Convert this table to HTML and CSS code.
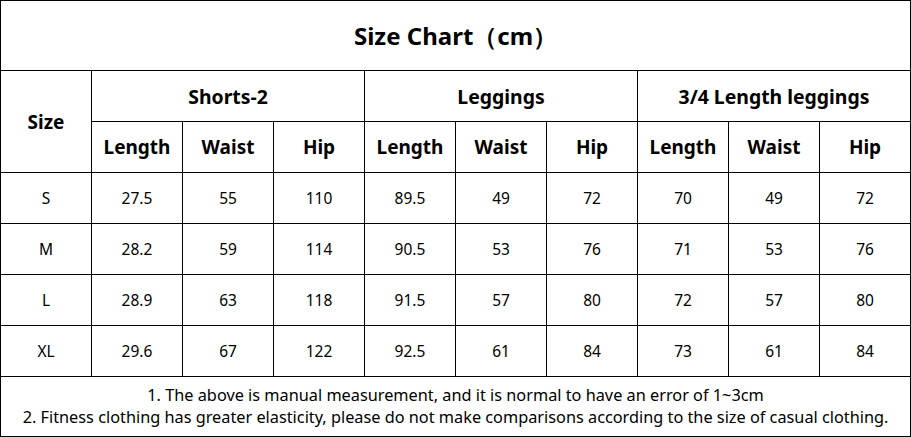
FILE: index.html
```html
<!DOCTYPE html>
<html>
<head>
<meta charset="utf-8">
<link rel="stylesheet" href="styles.css">
</head>
<body>
<table class="chart">
  <colgroup>
    <col class="c"><col class="c"><col class="c"><col class="c"><col class="c">
    <col class="c"><col class="c"><col class="c"><col class="c"><col class="c">
  </colgroup>
  <tr class="r-title"><th colspan="10" class="title">Size Chart（cm）</th></tr>
  <tr class="r-row"><th rowspan="2" class="head">Size</th><th colspan="3" class="head group">Shorts-2</th><th colspan="3" class="head group">Leggings</th><th colspan="3" class="head group">3/4 Length leggings</th></tr>
  <tr class="r-row"><th class="head">Length</th><th class="head">Waist</th><th class="head">Hip</th><th class="head">Length</th><th class="head">Waist</th><th class="head">Hip</th><th class="head">Length</th><th class="head">Waist</th><th class="head">Hip</th></tr>
  <tr class="r-row"><td>S</td><td>27.5</td><td>55</td><td>110</td><td>89.5</td><td>49</td><td>72</td><td>70</td><td>49</td><td>72</td></tr>
  <tr class="r-row"><td>M</td><td>28.2</td><td>59</td><td>114</td><td>90.5</td><td>53</td><td>76</td><td>71</td><td>53</td><td>76</td></tr>
  <tr class="r-row"><td>L</td><td>28.9</td><td>63</td><td>118</td><td>91.5</td><td>57</td><td>80</td><td>72</td><td>57</td><td>80</td></tr>
  <tr class="r-row"><td>XL</td><td>29.6</td><td>67</td><td>122</td><td>92.5</td><td>61</td><td>84</td><td>73</td><td>61</td><td>84</td></tr>
  <tr class="r-foot"><td colspan="10" class="notes">1. The above is manual measurement, and it is normal to have an error of 1~3cm<br>2. Fitness clothing has greater elasticity, please do not make comparisons according to the size of casual clothing.</td></tr>
</table>
</body>
</html>
```
FILE: styles.css
```css
html, body {
  margin: 0;
  padding: 0;
  background: #fff;
}
.chart {
  border-collapse: collapse;
  table-layout: fixed;
  width: 911px;
  font-family: "Noto Sans", "Open Sans", sans-serif;
  color: #000;
}
.c {
  width: 91px;
}
.chart th, .chart td {
  border: 1px solid #000;
  padding: 0;
  text-align: center;
  vertical-align: middle;
  overflow: hidden;
  white-space: nowrap;
}
.r-title { height: 70px; }
.r-row { height: 51px; }
.r-foot { height: 60px; }
.title {
  font-size: 24px;
  font-weight: 700;
}
.head {
  font-size: 19px;
  font-weight: 700;
}
.group {
  font-size: 19.4px;
}
.chart td {
  font-size: 15.5px;
}
.chart td.notes {
  font-size: 16.3px;
  line-height: 22px;
  padding-bottom: 2px;
}
```
